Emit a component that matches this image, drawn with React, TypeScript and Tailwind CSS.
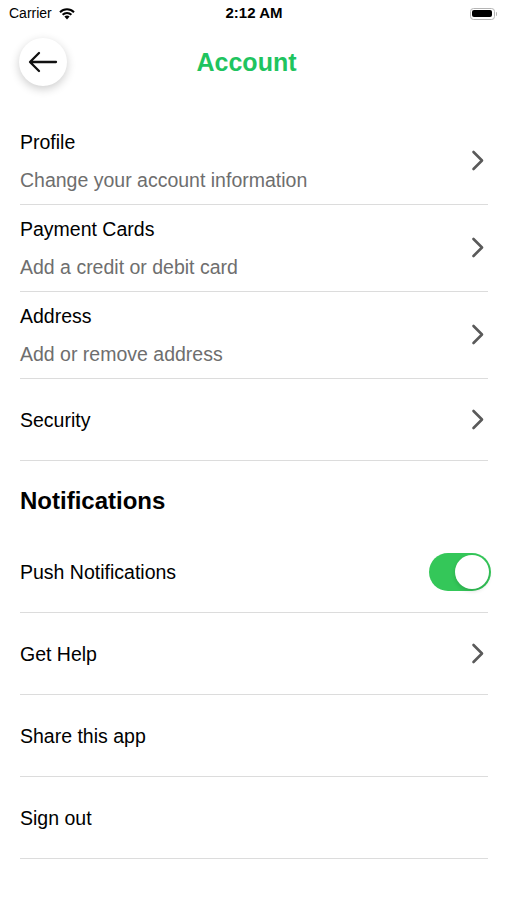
import React from "react";

const Chevron = () => (
  <svg width="14" height="21" viewBox="0 0 14 21" fill="none" className="shrink-0">
    <path d="M2.5 2 L11 10.5 L2.5 19" stroke="#5a5a5a" strokeWidth="2.6" strokeLinecap="round" strokeLinejoin="round" />
  </svg>
);

const Divider = () => <div className="h-px bg-[#dcdcdc]" />;

function TwoLineRow({ title, sub }: { title: string; sub: string }) {
  return (
    <div className="flex flex-col">
      <div className="flex h-[86px] items-center">
        <div className="flex flex-1 flex-col">
          <div className="text-[19.5px] leading-[24px] text-black">{title}</div>
          <div className="mt-[14px] text-[19.5px] leading-[24px] text-[#6e6e6e]">{sub}</div>
        </div>
        <div className="mr-[3px] mt-[-2px]">
          <Chevron />
        </div>
      </div>
      <Divider />
    </div>
  );
}

function SingleRow({ title, chevron = true, right }: { title: string; chevron?: boolean; right?: React.ReactNode }) {
  return (
    <div className="flex flex-col">
      <div className="flex h-[81px] items-center">
        <div className="flex-1 text-[19.5px] leading-[24px] text-black">{title}</div>
        {right}
        {chevron && !right && (
          <div className="mr-[3px]">
            <Chevron />
          </div>
        )}
      </div>
      <Divider />
    </div>
  );
}

export default function App() {
  return (
    <div
      className="h-[900px] w-[507px] bg-white"
      style={{ fontFamily: '"Liberation Sans", Arial, sans-serif' }}
    >
      {/* Status bar */}
      <div className="relative flex h-[27px] items-center px-[9px]">
        <div className="flex items-center gap-[6px]">
          <span className="text-[14px] text-black">Carrier</span>
          <svg width="18" height="13" viewBox="0 0 18 13">
            <path d="M9 12.5 L6.4 9.6 A3.8 3.8 0 0 1 11.6 9.6 Z" fill="#000" />
            <path d="M3.9 7.1 A7.3 7.3 0 0 1 14.1 7.1 L12.7 8.6 A5.3 5.3 0 0 0 5.3 8.6 Z" fill="#000" />
            <path d="M1.3 4.4 A11 11 0 0 1 16.7 4.4 L15.3 5.9 A9 9 0 0 0 2.7 5.9 Z" fill="#000" />
          </svg>
        </div>
        <div className="absolute left-0 right-0 top-0 flex h-[27px] items-center justify-center">
          <span className="ml-[1px] text-[15px] font-bold text-black">2:12 AM</span>
        </div>
        <div className="ml-auto mr-[1px] flex items-center">
          <div className="flex h-[12px] w-[25px] items-center rounded-[3.5px] border border-[#b5b5b5] p-[1.5px]">
            <div className="h-full w-full rounded-[2px] bg-black" />
          </div>
          <div className="ml-[1px] h-[4px] w-[1.5px] rounded-r bg-[#b5b5b5]" />
        </div>
      </div>

      {/* Header */}
      <div className="relative mt-[11px] flex h-[48px] items-center px-[19px]">
        <div className="flex h-[48px] w-[48px] items-center justify-center rounded-full bg-white shadow-[0_3px_10px_rgba(0,0,0,0.2)]">
          <svg width="30" height="22" viewBox="0 0 30 22" fill="none">
            <path d="M28 11 H3 M11 2 L2 11 L11 20" stroke="#111" strokeWidth="2.3" strokeLinecap="round" strokeLinejoin="round" />
          </svg>
        </div>
        <div className="absolute left-0 right-0 flex justify-center">
          <span className="ml-[-14px] mt-[2px] text-[25px] font-bold text-[#1fc45f]">Account</span>
        </div>
      </div>

      {/* List */}
      <div className="mt-[32px] flex flex-col pl-[20px] pr-[19px]">
        <TwoLineRow title="Profile" sub="Change your account information" />
        <TwoLineRow title="Payment Cards" sub="Add a credit or debit card" />
        <TwoLineRow title="Address" sub="Add or remove address" />
        <SingleRow title="Security" />

        <div className="flex h-[70px] items-center pt-[10px]">
          <span className="text-[24px] font-bold text-black">Notifications</span>
        </div>

        <SingleRow
          title="Push Notifications"
          right={
            <div className="mr-[-3px] mt-[1px] flex h-[38px] w-[62px] items-center justify-end rounded-full bg-[#34c759] p-[2px]">
              <div className="h-[34px] w-[34px] rounded-full bg-white shadow-[0_2px_4px_rgba(0,0,0,0.15)]" />
            </div>
          }
        />
        <SingleRow title="Get Help" />
        <SingleRow title="Share this app" chevron={false} />
        <SingleRow title="Sign out" chevron={false} />
      </div>
    </div>
  );
}
